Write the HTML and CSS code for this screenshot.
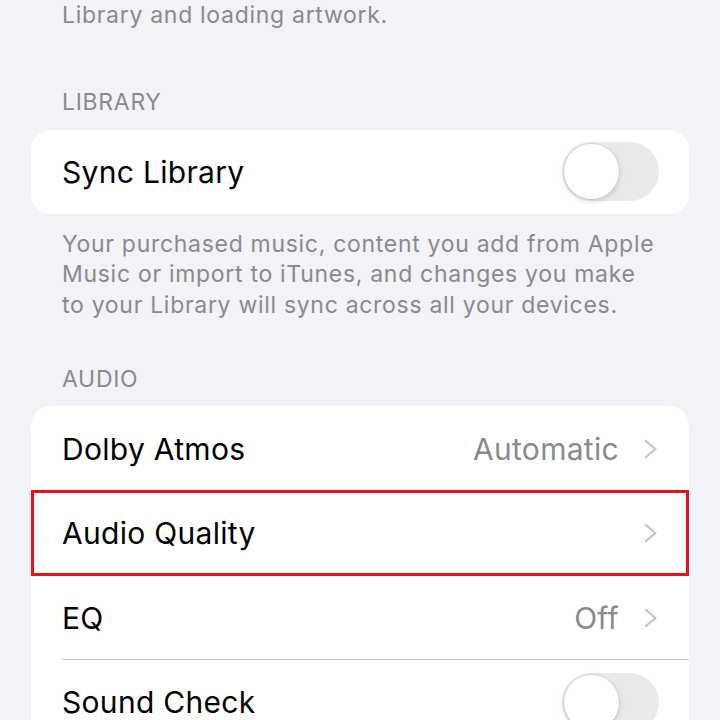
FILE: index.html
```html
<!DOCTYPE html>
<html>
<head>
<meta charset="utf-8">
<link rel="stylesheet" href="styles.css">
</head>
<body>
<div class="page">
  <p class="footnote top">Library and loading artwork.</p>

  <div class="header lib">LIBRARY</div>
  <div class="card">
    <div class="row">
      <span class="label">Sync Library</span>
      <span class="toggle"><span class="knob"></span></span>
    </div>
  </div>
  <p class="footnote">Your purchased music, content you add from Apple Music or import to iTunes, and changes you make to your Library will sync across all your devices.</p>

  <div class="header audio">AUDIO</div>
  <div class="card">
    <div class="row sep first">
      <span class="label">Dolby Atmos</span>
      <span class="value">Automatic</span>
      <svg class="chev" viewBox="0 0 14 20" width="14" height="20"><path d="M2 2 L11.5 10 L2 18" fill="none" stroke="#c4c4c7" stroke-width="2.2" stroke-linecap="round" stroke-linejoin="round"/></svg>
    </div>
    <div class="row highlighted">
      <span class="label">Audio Quality</span>
      <svg class="chev" viewBox="0 0 14 20" width="14" height="20"><path d="M2 2 L11.5 10 L2 18" fill="none" stroke="#c4c4c7" stroke-width="2.2" stroke-linecap="round" stroke-linejoin="round"/></svg>
    </div>
    <div class="row sep">
      <span class="label">EQ</span>
      <span class="value">Off</span>
      <svg class="chev" viewBox="0 0 14 20" width="14" height="20"><path d="M2 2 L11.5 10 L2 18" fill="none" stroke="#c4c4c7" stroke-width="2.2" stroke-linecap="round" stroke-linejoin="round"/></svg>
    </div>
    <div class="row">
      <span class="label">Sound Check</span>
      <span class="toggle"><span class="knob"></span></span>
    </div>
  </div>
</div>
</body>
</html>
```

FILE: styles.css
```css
html, body {
  margin: 0;
  padding: 0;
  background: #f2f2f7;
}
body {
  font-family: Inter, "Liberation Sans", sans-serif;
  overflow: hidden;
  height: 720px;
}
.page {
  padding: 0 31px;
}
.footnote {
  margin: 15px 0 0;
  padding: 0 31px;
  font-size: 23px;
  line-height: 30.5px;
  color: #8a8a8e;
  letter-spacing: 0.7px;
}
.footnote.top {
  margin-top: 0;
}
.header {
  padding: 0 31px;
  font-size: 23px;
  line-height: 30px;
  color: #8a8a8e;
  letter-spacing: 0.7px;
  margin-bottom: 13px;
}
.header.lib {
  margin-top: 56px;
}
.header.audio {
  margin-top: 44px;
  margin-bottom: 12px;
}
.card {
  background: #fff;
  border-radius: 20px;
  overflow: hidden;
}
.row {
  position: relative;
  display: flex;
  align-items: center;
  height: 84px;
  padding: 0 31px;
}
.row.first {
  height: 85px;
}
.row.sep::after {
  content: "";
  position: absolute;
  left: 31px;
  right: 0;
  bottom: 0;
  height: 1px;
  background: #c8c8cc;
}
.row.highlighted {
  box-sizing: border-box;
  border: 3px solid #e6121c;
  padding: 0 28px;
  height: 86px;
  margin-top: -1px;
  z-index: 1;
}
.label {
  flex: 1;
  font-size: 30px;
  color: #000;
  letter-spacing: 0.3px;
}
.value {
  font-size: 30px;
  color: #8a8a8e;
  margin-right: 25px;
  letter-spacing: 0.3px;
}
.chev {
  display: block;
}
.toggle {
  position: relative;
  width: 97px;
  height: 59px;
  border-radius: 30px;
  background: #e9e9eb;
  margin-right: -1px;
}
.knob {
  position: absolute;
  left: 2px;
  top: 2px;
  width: 55px;
  height: 55px;
  border-radius: 50%;
  background: #fff;
  box-shadow: 0 2px 6px rgba(0,0,0,0.15), 0 0 0 1px rgba(0,0,0,0.04);
}
```
